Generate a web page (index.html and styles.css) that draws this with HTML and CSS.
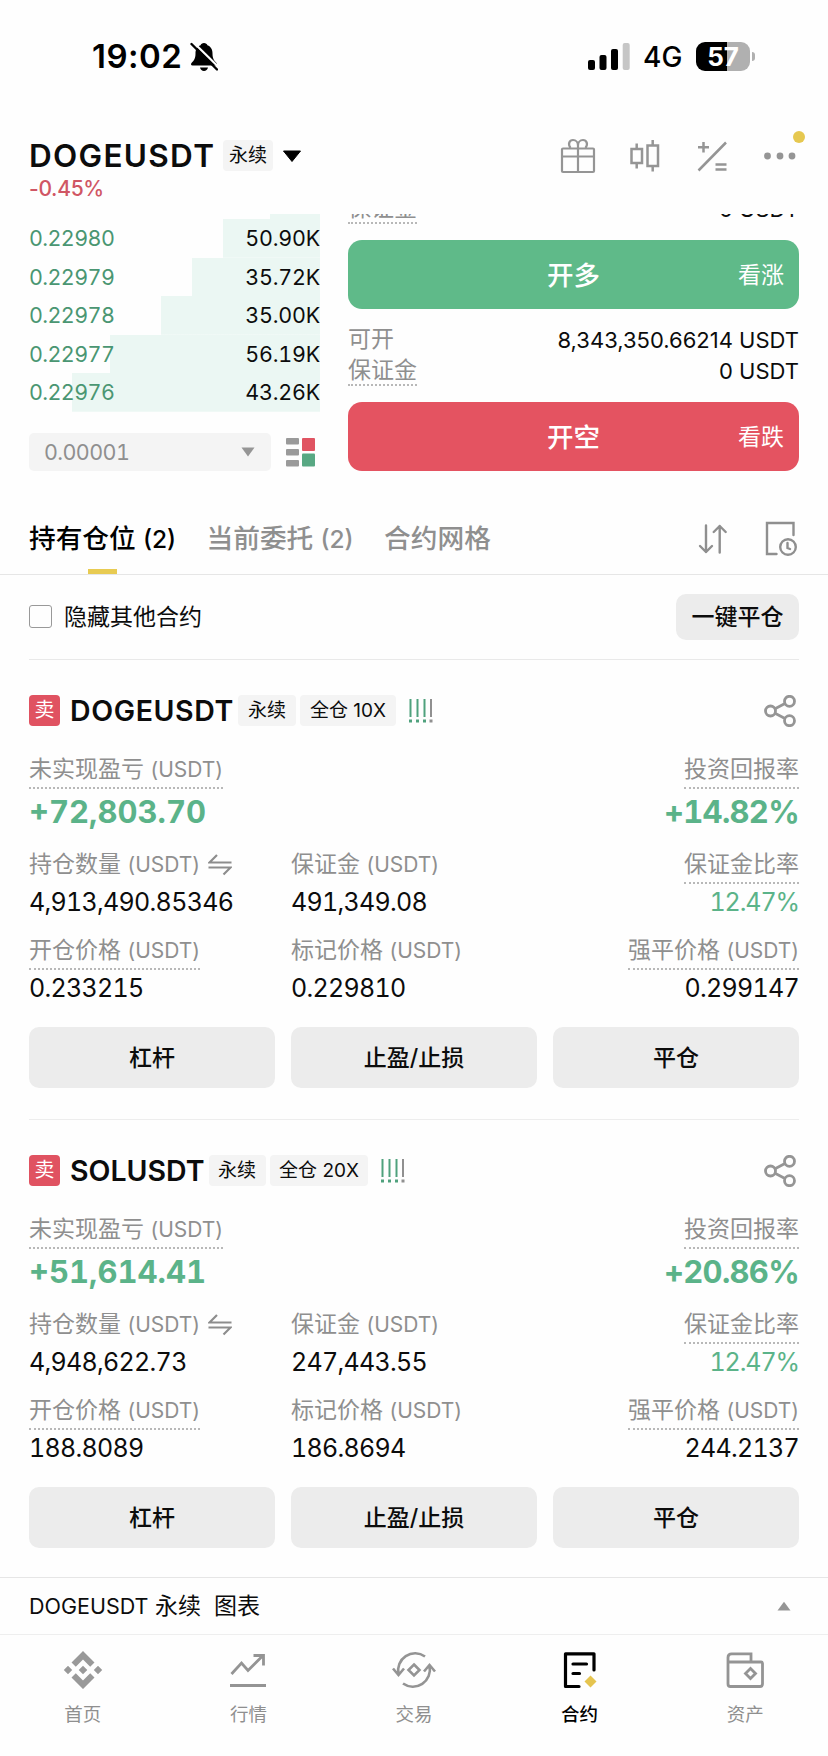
FILE: index.html
```html
<!DOCTYPE html>
<html lang="zh-CN">
<head>
    <meta charset="UTF-8">
    <meta name="viewport" content="width=device-width, initial-scale=1.0">
    <title>DOGEUSDT 永续</title>
    <link rel="stylesheet" href="styles.css">
</head>
<body>
    <!-- Iconos compartidos -->
    <svg class="sprite" width="0" height="0">
        <symbol id="share" viewBox="0 0 32 32">
            <g fill="none" stroke="#959595" stroke-width="2.8">
                <circle cx="6.5" cy="16" r="5"/>
                <circle cx="25.5" cy="6.3" r="5"/>
                <circle cx="25.5" cy="25.7" r="5"/>
                <path d="M11 13.7 21 8.6M11 18.3 21 23.4"/>
            </g>
        </symbol>
        <symbol id="risk" viewBox="0 0 24 24">
            <path d="M1.5 0V18M8.500 0V18M15.500 0V18" stroke="#4fa17d" stroke-width="2"/>
            <path d="M1.500 20.500V23.500M8.500 20.500V23.500M15.500 20.500V23.500" stroke="#4fa17d" stroke-width="3"/>
            <path d="M22 0V18" stroke="#909090" stroke-width="2"/>
            <path d="M22 20.500V23.500" stroke="#909090" stroke-width="3"/>
        </symbol>
        <symbol id="swap" viewBox="0 0 24 22">
            <path d="M9 1 1.500 8.500H23.500M.5 13.500H22.500L15.500 20.500" fill="none" stroke="#8d8d8d" stroke-width="2.200"/>
        </symbol>
    </svg>

    <div class="status">
        <span class="time">19:02</span>
        <svg class="bell" width="28" height="30" viewBox="0 0 28 30">
            <path d="M14 1c-1.800 0-3 1-3.400 2.200C7 4.500 5.500 7.500 5.500 11.500c0 5-1.500 7-4 9.500-.8 1-.6 2.500 1 2.500h23c1.600 0 1.800-1.500 1-2.500-2.500-2.500-4-4.500-4-9.500 0-4-1.500-7-5.100-8.300C17 2 15.800 1 14 1zM10 25.500h8c-.5 2-2 3.500-4 3.500s-3.500-1.500-4-3.500z" fill="#000"/>
            <path d="M3.500.5 29.500 26" stroke="#fefefe" stroke-width="2.200"/>
            <path d="M1.500 2 27 27.500" stroke="#000" stroke-width="2.400" stroke-linecap="round"/>
        </svg>
        <svg class="signal" width="42" height="28" viewBox="0 0 42 28">
            <rect x="0" y="17" width="7" height="10" rx="2"/>
            <rect x="11.500" y="12" width="7" height="15" rx="2"/>
            <rect x="23" y="6" width="7" height="21" rx="2"/>
            <rect x="34.700" y="0" width="7" height="27" rx="2" fill="#c6c6c6"/>
        </svg>
        <span class="net">4G</span>
        <div class="battery"><span>57</span></div>
        <i class="nub"></i>
    </div>

    <header>
        <div class="pair">
            <div class="pair-name">
                <h1>DOGEUSDT</h1>
                <span class="tag">永续</span>
                <svg width="18" height="12" viewBox="0 0 18 12"><path d="M.5 1H17.500L9 11.500z" fill="#000" stroke="#000" stroke-linejoin="round"/></svg>
            </div>
            <div class="change">-0.45%</div>
        </div>
        <div class="tools">
            <svg width="36" height="36" viewBox="0 0 36 36" fill="none" stroke="#959595" stroke-width="2.200">
                <rect x="2" y="10.500" width="32" height="23.500" rx="1"/>
                <path d="M2 18.500H34M18 10V34"/>
                <path d="M10.500 10C7.500 6 9.500 2 13 2c3 0 5 2.500 5 5.500V10M25.500 10c3-4 1-8-2.500-8-3 0-5 2.500-5 5.500"/>
            </svg>
            <svg width="36" height="36" viewBox="0 0 36 36" fill="none" stroke="#959595" stroke-width="2.500">
                <rect x="4.500" y="11" width="10.500" height="14"/>
                <path d="M9.700 5.500V11M9.700 25V30.500"/>
                <rect x="20.500" y="7.500" width="10.500" height="20.500"/>
                <path d="M25.700 2V7.500M25.700 28V33.500"/>
            </svg>
            <svg width="36" height="36" viewBox="0 0 36 36" fill="none" stroke="#959595" stroke-width="2.500">
                <path d="M4.500 32.500 32 4.500M9.500 4V14.500M4 9.200H15M21.500 26.500H32.500M21.500 31.500H32.500"/>
            </svg>
            <div class="more">
                <svg width="36" height="36" viewBox="0 0 36 36" fill="#959595"><circle cx="6.500" cy="18" r="3.400"/><circle cx="19" cy="18" r="3.400"/><circle cx="31" cy="18" r="3.400"/></svg>
                <i class="dot"></i>
            </div>
        </div>
    </header>

    <section class="trade">
        <div class="book">
            <div class="depth first" style="--w: 50px"></div>
            <div class="depth" style="--w: 97px"><span>0.22980</span><b>50.90K</b></div>
            <div class="depth" style="--w: 128px"><span>0.22979</span><b>35.72K</b></div>
            <div class="depth" style="--w: 159px"><span>0.22978</span><b>35.00K</b></div>
            <div class="depth" style="--w: 210px"><span>0.22977</span><b>56.19K</b></div>
            <div class="depth" style="--w: 248px"><span>0.22976</span><b>43.26K</b></div>
            <div class="step-row">
                <div class="step">
                    <span>0.00001</span>
                    <svg width="14" height="10" viewBox="0 0 14 10"><path d="M.5.500H13.500L7 9.500z" fill="#959595"/></svg>
                </div>
                <svg width="30" height="30" viewBox="0 0 30 30">
                    <g fill="#9a9a9a"><rect x="0" y="1" width="13" height="6.500" rx="1"/><rect x="0" y="12" width="13" height="6.500" rx="1"/><rect x="0" y="23" width="13" height="6.500" rx="1"/></g>
                    <rect x="16" y="1" width="13" height="13" rx="1" fill="#e05462"/>
                    <rect x="16" y="16.500" width="13" height="13" rx="1" fill="#58a883"/>
                </svg>
            </div>
        </div>
        <div class="order">
            <div class="line clipped"><span class="hint">保证金</span><b>0 USDT</b></div>
            <div class="btn long">开多<em>看涨</em></div>
            <div class="line"><span>可开</span><b>8,343,350.66214 USDT</b></div>
            <div class="line last"><span class="hint">保证金</span><b>0 USDT</b></div>
            <div class="btn short">开空<em>看跌</em></div>
        </div>
    </section>

    <nav class="tabs">
        <a class="active">持有仓位 <small>(2)</small></a>
        <a>当前委托 <small>(2)</small></a>
        <a>合约网格</a>
        <svg class="sort" width="30" height="32" viewBox="0 0 30 32" fill="none" stroke="#8f8f8f" stroke-width="2.400" stroke-linecap="round" stroke-linejoin="round">
            <path d="M8 2.500V29M2 23 8 29 14 23M21.700 29.500V3M15.700 9 21.700 3 27.700 9"/>
        </svg>
        <svg width="32" height="36" viewBox="0 0 32 36" fill="none" stroke="#8f8f8f" stroke-width="2.400" stroke-linecap="round">
            <path d="M28.500 14V2H2V33H11.500"/>
            <circle cx="23" cy="26" r="7.800"/>
            <path d="M22.500 22V27L25 28"/>
        </svg>
    </nav>

    <div class="filter">
        <i class="check"></i>
        <span>隐藏其他合约</span>
        <button>一键平仓</button>
    </div>

    <article class="card">
        <div class="card-head">
            <i class="side">卖</i>
            <h2>DOGEUSDT</h2>
            <span class="tag">永续</span>
            <span class="tag">全仓 10X</span>
            <svg class="risk" width="24" height="24"><use href="#risk"/></svg>
            <svg class="share" width="32" height="32"><use href="#share"/></svg>
        </div>
        <div class="grid">
            <div class="cell wide"><span class="hint">未实现盈亏 <small>(USDT)</small></span><strong>+72,803.70</strong></div>
            <div class="cell right"><span class="hint">投资回报率</span><strong>+14.82%</strong></div>
            <div class="cell"><span>持仓数量 <small>(USDT)</small><svg class="swap" width="24" height="22"><use href="#swap"/></svg></span><b>4,913,490.85346</b></div>
            <div class="cell"><span>保证金 <small>(USDT)</small></span><b>491,349.08</b></div>
            <div class="cell right"><span class="hint">保证金比率</span><b class="up">12.47%</b></div>
            <div class="cell"><span class="hint">开仓价格 <small>(USDT)</small></span><b>0.233215</b></div>
            <div class="cell"><span>标记价格 <small>(USDT)</small></span><b>0.229810</b></div>
            <div class="cell right"><span class="hint">强平价格 <small>(USDT)</small></span><b>0.299147</b></div>
        </div>
        <div class="actions"><button>杠杆</button><button>止盈/止损</button><button>平仓</button></div>
    </article>

    <article class="card">
        <div class="card-head">
            <i class="side">卖</i>
            <h2>SOLUSDT</h2>
            <span class="tag">永续</span>
            <span class="tag">全仓 20X</span>
            <svg class="risk" width="24" height="24"><use href="#risk"/></svg>
            <svg class="share" width="32" height="32"><use href="#share"/></svg>
        </div>
        <div class="grid">
            <div class="cell wide"><span class="hint">未实现盈亏 <small>(USDT)</small></span><strong>+51,614.41</strong></div>
            <div class="cell right"><span class="hint">投资回报率</span><strong>+20.86%</strong></div>
            <div class="cell"><span>持仓数量 <small>(USDT)</small><svg class="swap" width="24" height="22"><use href="#swap"/></svg></span><b>4,948,622.73</b></div>
            <div class="cell"><span>保证金 <small>(USDT)</small></span><b>247,443.55</b></div>
            <div class="cell right"><span class="hint">保证金比率</span><b class="up">12.47%</b></div>
            <div class="cell"><span class="hint">开仓价格 <small>(USDT)</small></span><b>188.8089</b></div>
            <div class="cell"><span>标记价格 <small>(USDT)</small></span><b>186.8694</b></div>
            <div class="cell right"><span class="hint">强平价格 <small>(USDT)</small></span><b>244.2137</b></div>
        </div>
        <div class="actions"><button>杠杆</button><button>止盈/止损</button><button>平仓</button></div>
    </article>

    <div class="chart-bar">
        <span><small>DOGEUSDT</small> 永续&nbsp; 图表</span>
        <svg width="14" height="10" viewBox="0 0 14 10"><path d="M.5 9.500H13.500L7 .8z" fill="#959595"/></svg>
    </div>

    <footer>
        <a>
            <svg width="40" height="40" viewBox="0 0 40 40" fill="#999">
                <path d="M20 1 31.500 12.500 27.200 16.800 20 9.600 12.800 16.800 8.500 12.500zM20 39 31.500 27.500 27.200 23.200 20 30.400 12.800 23.200 8.500 27.500zM20 15.700 24.300 20 20 24.300 15.700 20zM5 15.800 9.200 20 5 24.200.8 20zM35 15.800 39.200 20 35 24.200 30.800 20z"/>
            </svg>
            首页
        </a>
        <a>
            <svg width="40" height="40" viewBox="0 0 40 40" fill="none" stroke="#949494" stroke-width="2.800">
                <path d="M3.500 24 13.500 13 20 20.500 35 5.500M25.500 5.500H35.500V15.500"/>
                <path d="M2 35.500H38"/>
            </svg>
            行情
        </a>
        <a>
            <svg width="46" height="40" viewBox="0 0 46 40" fill="none" stroke="#949494" stroke-width="2.600">
                <path d="M34 6.500A17 17 0 0 0 7.500 24M2 18.500 7.500 25 13 18.500"/>
                <path d="M12 33.500A17 17 0 0 0 38.500 16M33 21.500 38.500 15 44 21.500"/>
                <path d="M23 14.500 28.500 20 23 25.500 17.500 20z"/>
            </svg>
            交易
        </a>
        <a class="active">
            <svg width="40" height="40" viewBox="0 0 40 40" fill="none" stroke="#000" stroke-width="3.200" stroke-linecap="round" stroke-linejoin="round">
                <path d="M34 20V3.800H5.500V36.500H19"/>
                <path d="M13 14H26.500M13 23.500H19.500"/>
                <path d="M30.500 25.500 36.500 31.500 30.500 37.500 24.500 31.500z" fill="#e5c44f" stroke="none"/>
            </svg>
            合约
        </a>
        <a>
            <svg width="40" height="40" viewBox="0 0 40 40" fill="none" stroke="#949494" stroke-width="2.800">
                <path d="M3 12V34Q3 36.500 5.500 36.500H35Q37.500 36.500 37.500 34V13.500Q37.500 12 36 12H3V7.500Q3 3.800 6.700 3.800H26V12"/>
                <path d="M25.500 18.500 30.500 23.500 25.500 28.500 20.500 23.500z"/>
            </svg>
            资产
        </a>
    </footer>
</body>
</html>
```
FILE: styles.css
```css
* {
    box-sizing: border-box;
}

body {
    margin: 0;
    width: 828px;
    height: 1756px;
    overflow: hidden;
    background: #fefefe;
    color: #0c0c0c;
    font-family: Inter, "Noto Sans CJK SC", sans-serif;
    font-size: 23px;
}

h1, h2 {
    margin: 0;
    font-weight: 600;
}

b {
    font-weight: 400;
    font-variant-numeric: tabular-nums;
}

i, em {
    font-style: normal;
}

small {
    font-size: 21px;
}

button {
    border: none;
    background: #ececec;
    color: #0c0c0c;
    font: inherit;
    font-weight: 500;
}

svg {
    display: block;
    flex: none;
}

.sprite {
    display: none;
}

/* Barra de estado */
.status {
    height: 113px;
    padding-left: 92px;
    display: flex;
    align-items: center;
    color: #000;
}

.time {
    width: 98px;
    padding-bottom: 1px;
    font-size: 33px;
    font-weight: 600;
    letter-spacing: 0.5px;
}

.signal {
    margin-left: 370px;
}

.net {
    width: 53px;
    margin-left: 13px;
    font-size: 28px;
    font-weight: 500;
}

.battery {
    width: 54px;
    height: 29px;
    border-radius: 9px;
    background: linear-gradient(90deg, #000 31px, #b0b0b0 31px);
    color: white;
    font-size: 26px;
    font-weight: 700;
    line-height: 29px;
    text-align: center;
}

.nub {
    width: 3px;
    height: 9px;
    margin-left: 2px;
    border-radius: 0 4px 4px 0;
    background: #b0b0b0;
}

/* Cabecera */
header {
    height: 101px;
    padding: 27px 29px 0;
    display: flex;
    justify-content: space-between;
}

.pair-name {
    height: 31px;
    display: flex;
    align-items: center;
}

h1 {
    width: 194px;
    font-size: 31.5px;
    letter-spacing: 1.3px;
    line-height: 31px;
}

.tag {
    height: 31px;
    padding: 0 10px;
    border-radius: 4px;
    background: #f4f4f4;
    font-size: 19px;
    line-height: 31px;
    white-space: nowrap;
}

.pair-name .tag {
    padding: 0 6px;
    margin-right: 10px;
}

.change {
    margin-top: 4px;
    color: #d05664;
    font-size: 21px;
    font-weight: 500;
    letter-spacing: -0.3px;
    line-height: 28px;
}

.tools {
    display: flex;
    gap: 31px;
    margin: -2px 2px 0 0;
}

.more {
    position: relative;
    height: 36px;
}

.dot {
    position: absolute;
    top: -7px;
    right: -8px;
    width: 12px;
    height: 12px;
    border-radius: 50%;
    background: #e6c850;
}

/* Libro de ordenes y botones */
.trade {
    height: 281px;
    padding: 0 29px;
    display: flex;
    justify-content: space-between;
    overflow: hidden;
}

.book {
    width: 291px;
    font-size: 21.5px;
    font-variant-numeric: tabular-nums;
}

.depth {
    height: 38.5px;
    display: flex;
    justify-content: space-between;
    align-items: center;
    background: linear-gradient(#ebf7f3, #ebf7f3) right / var(--w) 100% no-repeat;
}

.depth.first {
    height: 5px;
}

.depth span {
    color: #4a9672;
    letter-spacing: -0.6px;
}

.depth b {
    letter-spacing: -0.2px;
}

.step-row {
    display: flex;
    align-items: center;
    gap: 15px;
    margin-top: 21px;
}

.step {
    width: 242px;
    height: 38px;
    padding: 0 16px 0 15px;
    display: flex;
    justify-content: space-between;
    align-items: center;
    border-radius: 5px;
    background: #f4f4f4;
    color: #8f8f8f;
    letter-spacing: -0.6px;
}

.order {
    width: 451px;
}

.line {
    height: 31px;
    display: flex;
    justify-content: space-between;
    font-size: 22px;
    line-height: 31px;
}

.line span {
    color: #8f8f8f;
    font-size: 23px;
}

.line b {
    padding-top: 1px;
    font-variant-numeric: normal;
}

.line.clipped {
    height: 26px;
    align-items: flex-end;
}

.line.clipped .hint {
    margin-bottom: 16px;
}

.line.clipped b {
    margin-bottom: 15px;
}

.line.last {
    height: 47px;
}

.hint {
    border-bottom: 2px dotted #b8b8b8;
}

.line .hint {
    height: 31px;
}

.btn {
    height: 69px;
    border-radius: 14px;
    padding: 0 15px 3px;
    display: grid;
    grid-template-columns: 1fr auto 1fr;
    align-items: center;
    color: white;
    font-size: 26.5px;
    font-weight: 500;
}

.btn::before {
    content: "";
}

.btn em {
    text-align: right;
    font-size: 23px;
    font-weight: 400;
}

.long {
    margin-bottom: 15px;
    background: #5fba89;
}

.short {
    background: #e45361;
}

/* Pestanas */
.tabs {
    height: 80px;
    padding: 11px 31px 0 29px;
    display: flex;
    align-items: flex-start;
    border-bottom: 1px solid #e6e6e6;
}

.tabs a {
    height: 68px;
    margin-right: 30.5px;
    color: #8f8f8f;
    font-size: 26.7px;
    font-weight: 500;
    line-height: 64px;
}

.tabs small {
    font-size: 24.5px;
}

.tabs .active {
    color: #000;
    background: linear-gradient(#e8cb52, #e8cb52) 50% 100% / 29px 5px no-repeat;
}

.tabs svg {
    margin-top: 15px;
}

.tabs .sort {
    margin: 17px 37px 0 auto;
}

.filter {
    height: 85px;
    margin: 0 29px;
    display: flex;
    align-items: center;
    border-bottom: 1px solid #e9e9e9;
}

.filter span {
    padding-bottom: 4px;
}

.check {
    width: 23px;
    height: 23px;
    margin: 0 12px 2px 0;
    border: 1.5px solid #999;
    border-radius: 3px;
}

.filter button {
    width: 123px;
    height: 46px;
    margin-left: auto;
    padding: 0 0 4px;
    border-radius: 10px;
}

/* Tarjetas de posicion */
.card {
    height: 460px;
    margin: 0 29px;
    padding-top: 35px;
    border-bottom: 1px solid #ededed;
}

.card + .card {
    height: 457px;
    border: none;
}

.card-head {
    height: 31px;
    display: flex;
    align-items: center;
}

.side {
    width: 31px;
    height: 31px;
    margin-right: 10px;
    border-radius: 4px;
    background: #e05261;
    color: white;
    font-size: 20px;
    line-height: 30px;
    text-align: center;
}

h2 {
    margin-right: 4px;
    font-size: 28.5px;
    letter-spacing: 0.6px;
    line-height: 31px;
}

.card + .card h2 {
    letter-spacing: 0;
}

.card-head .tag {
    margin-right: 4px;
}

.card + .card .tag {
    padding: 0 9.5px;
}

.risk {
    margin-left: 9px;
}

.share {
    margin: 0 3px 0 auto;
}

.grid {
    display: grid;
    grid-template-columns: repeat(3, 246px);
    grid-template-rows: 95px 86px 91px;
    column-gap: 16px;
    margin-top: 29px;
}

.cell {
    display: flex;
    flex-direction: column;
    align-items: flex-start;
    white-space: nowrap;
}

.wide {
    grid-column: span 2;
}

.right {
    align-items: flex-end;
}

.cell span {
    height: 34px;
    color: #8f8f8f;
    font-size: 23px;
    line-height: 29px;
}

.swap {
    display: inline-block;
    margin-left: 8px;
    vertical-align: -4px;
}

.cell b {
    margin-top: 2px;
    font-size: 25px;
    letter-spacing: -0.7px;
    line-height: 32px;
}

.cell strong {
    margin-top: 4px;
    color: #5bb389;
    font-size: 31px;
    font-weight: 700;
    font-variant-numeric: tabular-nums;
    line-height: 38px;
}

.right strong {
    letter-spacing: -0.7px;
}

.cell .up {
    color: #5bb389;
    letter-spacing: -1.1px;
}

.actions {
    display: flex;
    gap: 16px;
}

.actions button {
    width: 246px;
    height: 61px;
    padding: 0 0 3px;
    border-radius: 10px;
}

/* Pie */
.chart-bar {
    height: 57px;
    padding: 0 37px 0 29px;
    display: flex;
    align-items: center;
    justify-content: space-between;
    border-top: 1px solid #e6e6e6;
}

.chart-bar span {
    padding-bottom: 4px;
}

.chart-bar small {
    font-size: 21.5px;
}

footer {
    height: 122px;
    padding-top: 15px;
    display: flex;
    border-top: 1px solid #eee;
}

footer a {
    flex: 1;
    display: flex;
    flex-direction: column;
    align-items: center;
    gap: 10px;
    color: #8f8f8f;
    font-size: 18.5px;
    line-height: 28px;
}

footer .active {
    color: #000;
    font-weight: 500;
}
```
